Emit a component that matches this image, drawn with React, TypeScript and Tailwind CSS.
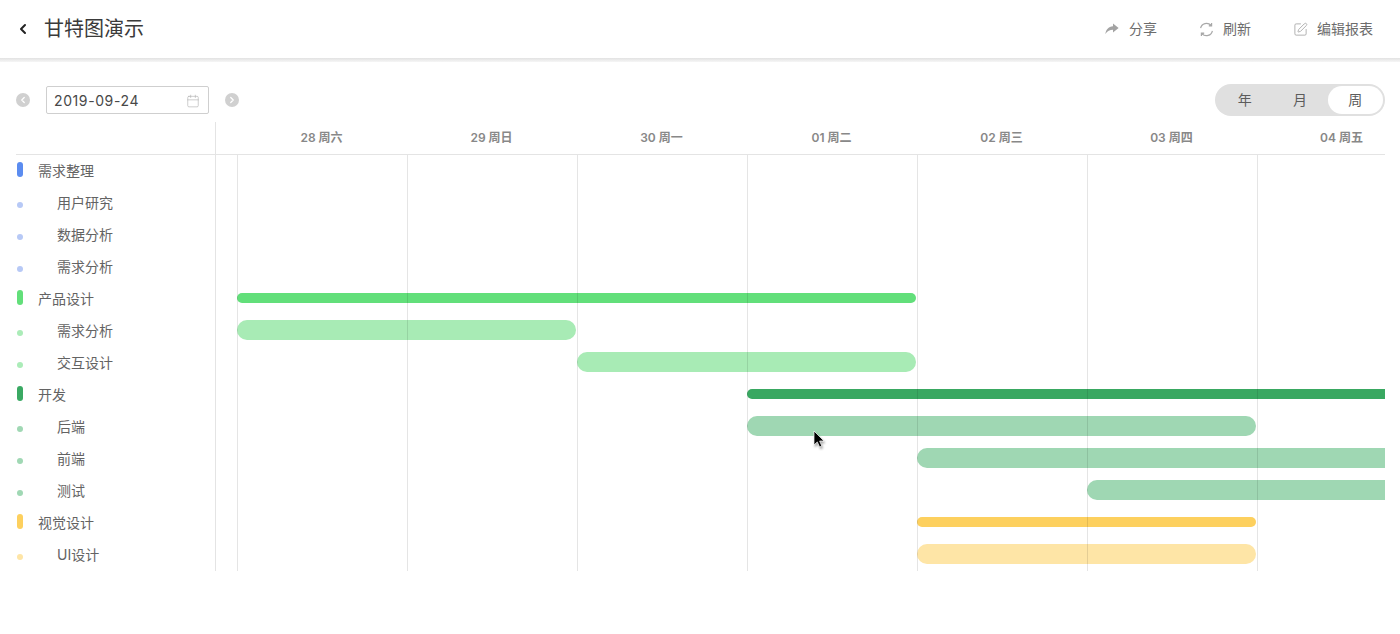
import { FC } from 'react';
import { Calendar, ChevronLeft, ChevronRight, SquarePen } from 'lucide-react';

type Task = { name: string; group?: boolean; dot: string; bar?: string };

const tasks: Task[] = [
  { name: '需求整理', group: true, dot: 'bg-[#5b8cf0]' },
  { name: '用户研究', dot: 'bg-[#b7c9f6]' },
  { name: '数据分析', dot: 'bg-[#b7c9f6]' },
  { name: '需求分析', dot: 'bg-[#b7c9f6]' },
  {
    name: '产品设计',
    group: true,
    dot: 'bg-[#62df7a]',
    bar: 'col-start-2 col-span-4 bg-[#62df7a]',
  },
  {
    name: '需求分析',
    dot: 'bg-[#abecb8]',
    bar: 'col-start-2 col-span-2 bg-[#a8ebb5]',
  },
  {
    name: '交互设计',
    dot: 'bg-[#abecb8]',
    bar: 'col-start-4 col-span-2 bg-[#a8ebb5]',
  },
  {
    name: '开发',
    group: true,
    dot: 'bg-[#3aa963]',
    bar: 'col-start-5 col-span-5 bg-[#39a861]',
  },
  {
    name: '后端',
    dot: 'bg-[#a0d8b4]',
    bar: 'col-start-5 col-span-3 bg-[#9fd7b3]',
  },
  {
    name: '前端',
    dot: 'bg-[#a0d8b4]',
    bar: 'col-start-6 col-span-4 bg-[#9fd7b3]',
  },
  {
    name: '测试',
    dot: 'bg-[#a0d8b4]',
    bar: 'col-start-7 col-span-3 bg-[#9fd7b3]',
  },
  {
    name: '视觉设计',
    group: true,
    dot: 'bg-[#fdd05e]',
    bar: 'col-start-6 col-span-2 bg-[#fdd05e]',
  },
  {
    name: 'UI设计',
    dot: 'bg-[#fee5a6]',
    bar: 'col-start-6 col-span-2 bg-[#fee5a6]',
  },
];

const days = ['28 周六', '29 周日', '30 周一', '01 周二', '02 周三', '03 周四', '04 周五'];

const ShareIcon = () => (
  <svg width="14" height="12" viewBox="0 0 14 12" fill="#a3a3a3">
    <path d="M8 0.5 L13.6 5 L8 9.5 V6.8 C4.8 6.8 2.4 7.8 0.4 11 C0.9 6.6 3.4 3.6 8 3.2 Z" />
  </svg>
);

const RefreshIcon = () => (
  <svg
    width="15"
    height="15"
    viewBox="0 0 15 15"
    fill="none"
    stroke="#a8a8a8"
    strokeWidth="1.2"
  >
    <path d="M1.6 6.2 A6 6 0 0 1 12 3.4" />
    <path d="M13.4 8.8 A6 6 0 0 1 3 11.6" />
    <path d="M12.6 1 V3.9 H9.8" fill="#a8a8a8" />
    <path d="M2.4 14 V11.1 H5.2" fill="#a8a8a8" />
  </svg>
);

const Cursor = () => (
  <svg width="14" height="20" viewBox="0 0 14 20" className="drop-shadow-[1px_2px_1px_rgba(0,0,0,0.35)]">
    <path
      d="M1 1 V15 L4.3 11.9 L6.6 17 L8.8 16 L6.6 11 H11 Z"
      fill="#000"
      stroke="#fff"
      strokeWidth="0.7"
    />
  </svg>
);

const App: FC = () => {
  return (
    <div className="relative h-[634px] w-[1400px] overflow-hidden bg-white font-['Inter','Noto_Sans_CJK_SC',sans-serif] text-[#636363]">
      <header className="flex h-[58px] items-center justify-between pr-[27px] pl-[15px]">
        <div className="flex items-center">
          <ChevronLeft size={16} strokeWidth={3} className="text-[#222]" />
          <h1 className="ml-[13px] text-xl leading-none font-normal text-[#3a3a3a]">
            甘特图演示
          </h1>
        </div>
        <div className="flex items-center gap-[42px] text-sm text-[#6c6c6c]">
          <span className="flex items-center gap-[10px]">
            <ShareIcon />
            分享
          </span>
          <span className="flex items-center gap-[9px]">
            <RefreshIcon />
            刷新
          </span>
          <span className="flex items-center gap-[9px]">
            <SquarePen size={15} strokeWidth={1.4} className="text-[#a8a8a8]" />
            编辑报表
          </span>
        </div>
      </header>
      <div className="h-[4px] bg-gradient-to-b from-[#e2e2e2] to-[#f6f6f6]"></div>

      <div className="flex h-[60px] items-start justify-between pt-[22px] pr-[15px] pl-[16px]">
        <div className="flex items-center pt-[2px]">
          <span className="flex h-[14px] w-[14px] items-center justify-center rounded-full bg-[#d0d0d0] text-white">
            <ChevronLeft size={10} strokeWidth={3} />
          </span>
          <div className="ml-[16px] flex h-[28px] w-[163px] items-center justify-between rounded-[2px] border border-[#cfcfcf] pt-[1px] pr-[8px] pl-[7px] text-sm tracking-[0.6px] text-[#484848]">
            2019-09-24
            <Calendar size={14} strokeWidth={1} className="text-[#aaa]" />
          </div>
          <span className="ml-[16px] flex h-[14px] w-[14px] items-center justify-center rounded-full bg-[#d0d0d0] text-white">
            <ChevronRight size={10} strokeWidth={3} />
          </span>
        </div>
        <div className="grid h-[32px] w-[170px] grid-cols-3 rounded-full bg-[#e0e0e0] p-[2px] text-sm text-[#5c5c5c]">
          <span className="flex items-center justify-center">年</span>
          <span className="flex items-center justify-center">月</span>
          <span className="flex items-center justify-center rounded-full bg-white">周</span>
        </div>
      </div>

      <div className="ml-[16px] flex h-[449px] w-[1369px]">
        <div className="w-[200px] shrink-0 border-r border-[#e4e4e4]">
          <div className="h-[33px] border-b border-[#e4e4e4]"></div>
          {tasks.map((task, i) => (
            <div key={i} className="flex h-8 items-center text-sm">
              {task.group ? (
                <span className={`mb-[3px] ml-[1px] h-[15px] w-[6px] rounded-full ${task.dot}`}></span>
              ) : (
                <span className={`mt-[4px] ml-[1px] h-[6px] w-[6px] rounded-full ${task.dot}`}></span>
              )}
              <span className={task.group ? 'ml-[15px]' : 'ml-[34px]'}>{task.name}</span>
            </div>
          ))}
        </div>

        <div className="relative flex-1 overflow-hidden">
          <div className="grid h-[33px] grid-cols-[21px_repeat(8,170px)] border-b border-[#e4e4e4]">
            {days.map((day, i) => (
              <div
                key={day}
                className={`flex items-center justify-center pr-px text-xs font-semibold text-[#888] ${i === 0 ? 'col-start-2' : ''}`}
              >
                {day}
              </div>
            ))}
          </div>

          <div className="relative">
            {tasks.map((task, i) => (
              <div
                key={i}
                className="grid h-8 grid-cols-[21px_repeat(8,170px)] items-center pb-[2px]"
              >
                {task.bar && (
                  <div
                    className={`mr-px ${task.group ? 'h-[10px] rounded-[5px]' : 'h-[20px] rounded-[10px]'} ${task.bar}`}
                  ></div>
                )}
              </div>
            ))}
            <div className="absolute inset-0 grid grid-cols-[21px_repeat(8,170px)]">
              {days.map((day, i) => (
                <div
                  key={day}
                  className={`border-l border-black/10 ${i === 0 ? 'col-start-2' : ''}`}
                ></div>
              ))}
            </div>
          </div>
        </div>
      </div>

      <div className="absolute top-[430px] left-[813px]">
        <Cursor />
      </div>
    </div>
  );
};

export default App;
